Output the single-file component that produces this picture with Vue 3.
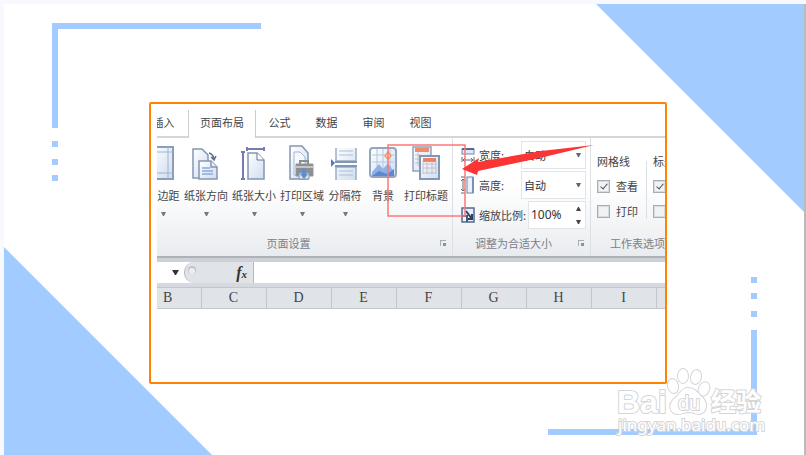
<template>
    <div class="page">
        <main class="slide">
            <div class="corner corner-top"></div>
            <div class="corner corner-bottom"></div>
            <svg class="bracket bracket-top" width="209" height="158" viewBox="0 0 209 158" fill="#a2cbff">
                <path d="M0 0H209V6H6V105H0zM0 118h6v6H0zM0 136h6v6H0zM0 152h6v6H0z" />
            </svg>
            <svg class="bracket bracket-bottom" width="209" height="158" viewBox="0 0 209 158" fill="#a2cbff">
                <path d="M209 158H0V152H203V53H209zM203 0h6v6h-6zM203 16h6v6h-6zM203 34h6v6h-6z" />
            </svg>

            <section class="card">
                <nav class="tabs">
                    <button class="tab tab-first">插入</button>
                    <button class="tab active">页面布局</button>
                    <button class="tab" v-for="name in tabs" :key="name">{{ name }}</button>
                    <span class="tab-rest"></span>
                </nav>

                <div class="ribbon">
                    <div class="group group-setup">
                        <div class="tools">
                            <button class="tool" v-for="tool in tools" :key="tool.icon" :class="tool.icon">
                                <svg class="tool-icon" width="30" height="36" viewBox="0 0 30 36" fill="none">
                                    <defs>
                                        <linearGradient :id="'g-' + tool.icon" x1="0" y1="0" x2="1" y2="1">
                                            <stop offset="0" stop-color="#ffffff" />
                                            <stop offset="1" stop-color="#cfdcf1" />
                                        </linearGradient>
                                    </defs>
                                    <g v-if="tool.icon === 'margins'" stroke="#8b9db8">
                                        <rect x="3" y="2" width="22" height="32" :fill="'url(#g-' + tool.icon + ')'" stroke-width="2" />
                                        <path d="M3 7H25M3 28H25M8 2V34M20 2V34" stroke="#9db3d2" />
                                    </g>
                                    <g v-else-if="tool.icon === 'direction'" :fill="'url(#g-' + tool.icon + ')'" stroke="#8296b3" stroke-width="1.5">
                                        <path d="M2 4H11L17 10V33H2z" />
                                        <path d="M8 16H20L26 22V34H8z" />
                                        <path d="M20 16V22H26" />
                                        <path d="M11 23H19M11 26H22M11 29H22" stroke="#8ba9db" />
                                        <path d="M18 8Q22 9 23 14M20 12L23 15L25 11" stroke="#5c708c" fill="none" />
                                    </g>
                                    <g v-else-if="tool.icon === 'size'">
                                        <path d="M4 7V35M2 7H6M2 34H6M8 4H25M8 2V6M25 2V6" stroke="#7a79b8" stroke-width="2" />
                                        <path d="M9 8H18L25 15V34H9z" :fill="'url(#g-' + tool.icon + ')'" stroke="#8296b3" stroke-width="1.5" />
                                        <path d="M18 8V15H25" fill="#fff" stroke="#62748d" />
                                    </g>
                                    <g v-else-if="tool.icon === 'area'">
                                        <path d="M3 1H15L21 8V34H3z" :fill="'url(#g-' + tool.icon + ')'" stroke="#8296b3" stroke-width="1.5" />
                                        <path d="M7 7H13L18 12V30H7z" fill="#f6f9ff" stroke="#a4b6d1" />
                                        <path d="M13 20V16H21V20" fill="none" stroke="#8c8c91" stroke-width="2" />
                                        <path d="M9 19H26V31H9z" fill="#8a8f96" stroke="#92979e" />
                                        <path d="M9 22H26" stroke="#c3c5c7" stroke-width="2" />
                                        <path d="M12 28H22V34H12z" fill="#dce2eb" stroke="#8894a5" />
                                        <path d="M15 24H19V29H21L17 34L13 29H15z" fill="#5990d1" />
                                    </g>
                                    <g v-else-if="tool.icon === 'breaks'">
                                        <path d="M6 3V16H26V3M6 35V22H26V35" :fill="'url(#g-' + tool.icon + ')'" stroke="#9badc5" stroke-width="1.5" />
                                        <path d="M9 6H23M9 10H23M9 26H23M9 30H23" stroke="#aebdd1" />
                                        <path d="M5 17H27M5 21H27" stroke="#8297b3" stroke-width="2" />
                                        <path d="M1 14L5 18L1 22z" fill="#4d7ad2" />
                                    </g>
                                    <g v-else-if="tool.icon === 'background'">
                                        <rect x="2" y="3" width="26" height="29" rx="3" :fill="'url(#g-' + tool.icon + ')'" stroke="#92a6c2" stroke-width="2" />
                                        <path d="M4 10H26M4 17H26M9 4V25M15 4V25M22 4V25" stroke="#b4c6df" />
                                        <path d="M4 27L11 19L15 24L20 18L26 27V31H4z" fill="#8fb2e6" />
                                        <path d="M4 31L11 26L19 29L26 24V31z" fill="#5b88d3" />
                                        <path d="M20 7L23 11L20 14L17 11z" fill="#fff2d7" stroke="#f29a67" stroke-width="1.5" />
                                    </g>
                                    <g v-else>
                                        <path d="M2 2H20V26H2z" :fill="'url(#g-' + tool.icon + ')'" stroke="#8ea3c0" stroke-width="1.5" />
                                        <path d="M4 5H18" stroke="#ef8c6c" stroke-width="4" />
                                        <path d="M4 10H10M4 14H10M4 18H10M7 7V21" stroke="#c3bfc9" />
                                        <rect x="9" y="11" width="19" height="23" :fill="'url(#g-' + tool.icon + ')'" stroke="#7f97b8" stroke-width="2" />
                                        <path d="M12 15H25" stroke="#ef805d" stroke-width="4" />
                                        <path d="M12 19H25M12 23H25M12 28H25M12 16V29M16 16V29M21 16V29M25 16V29" stroke="#c3bfc9" />
                                    </g>
                                </svg>
                                <span class="tool-name">{{ tool.name }}</span>
                                <svg v-if="tool.menu" class="caret" width="5" height="4" viewBox="0 0 5 4"><path d="M0 0H5L3 4H2z" fill="#777" /></svg>
                            </button>
                        </div>
                        <div class="group-title">页面设置</div>
                    </div>

                    <div class="group group-fit">
                        <div class="fit-rows">
                            <div class="fit-row">
                                <svg width="14" height="16" viewBox="0 0 14 16" fill="none"><rect x="1" y="2" width="12" height="5" fill="#dce8f9" stroke="#7287a5" /><path d="M1 2H13" stroke="#526b90" stroke-width="2" /><path d="M1 10V15M13 10V15M3 13H11M4 11L2 13L4 15M10 11L12 13L10 15" stroke="#5f697a" /></svg>
                                <label for="fit-width">宽度:</label>
                                <span class="field">
                                    <select id="fit-width" v-model="fitWidth"><option>自动</option></select>
                                    <svg class="field-mark" width="5" height="4" viewBox="0 0 5 4"><path d="M0 0H5L3 4H2z" fill="#666" /></svg>
                                </span>
                            </div>
                            <div class="fit-row">
                                <svg width="14" height="18" viewBox="0 0 14 18" fill="none"><rect x="6" y="1" width="6" height="16" fill="#eaf2ff" stroke="#6d84a5" /><path d="M12 1V17" stroke="#7992b4" stroke-width="2" /><path d="M0 1H4M0 17H4M2 3V15M0 5L2 3L4 5M0 13L2 15L4 13" stroke="#5f697a" /></svg>
                                <label for="fit-height">高度:</label>
                                <span class="field">
                                    <select id="fit-height" v-model="fitHeight"><option>自动</option></select>
                                    <svg class="field-mark" width="5" height="4" viewBox="0 0 5 4"><path d="M0 0H5L3 4H2z" fill="#666" /></svg>
                                </span>
                            </div>
                            <div class="fit-row">
                                <svg width="14" height="16" viewBox="0 0 14 16" fill="none"><rect x="1" y="1" width="12" height="14" fill="#e5efff" stroke="#576b89" stroke-width="1.5" /><path d="M1 9H6V15" fill="#fff" stroke="#445b7c" stroke-width="2" /><path d="M5 4L11 12M11 7V12H7" stroke="#2c405e" stroke-width="2" /></svg>
                                <label for="fit-scale">缩放比例:</label>
                                <span class="field field-scale">
                                    <input id="fit-scale" type="text" v-model="scale">
                                    <svg class="field-mark" width="5" height="17" viewBox="0 0 5 17"><path d="M2 0H3L5 4H0zM0 13H5L3 17H2z" fill="#444" /></svg>
                                </span>
                            </div>
                        </div>
                        <div class="group-title">调整为合适大小</div>
                    </div>

                    <div class="group group-sheet">
                        <div class="options">
                            <fieldset class="option">
                                <legend>网格线</legend>
                                <label><input type="checkbox" v-model="gridView">查看</label>
                                <label><input type="checkbox" v-model="gridPrint">打印</label>
                            </fieldset>
                            <fieldset class="option">
                                <legend>标题</legend>
                                <label><input type="checkbox" aria-label="查看标题" v-model="headView"></label>
                                <label><input type="checkbox" aria-label="打印标题" v-model="headPrint"></label>
                            </fieldset>
                        </div>
                        <div class="group-title">工作表选项</div>
                    </div>
                </div>

                <div class="formula">
                    <button class="name-menu" aria-label="名称框">
                        <svg width="7" height="5" viewBox="0 0 7 5"><path d="M0 0H7L4 5H3z" fill="#333" /></svg>
                    </button>
                    <div class="fx-box">
                        <span class="knob"></span>
                        <button class="fx">f<small>x</small></button>
                    </div>
                    <input class="formula-input" type="text" aria-label="编辑栏" v-model="formula">
                </div>

                <table class="sheet">
                    <thead>
                        <tr><th v-for="col in columns" :key="col">{{ col }}</th><th></th></tr>
                    </thead>
                </table>

                <svg class="note" width="210" height="78" viewBox="0 0 210 78">
                    <rect x="2" y="4" width="77" height="71" fill="none" stroke="#fb7777" stroke-width="1.5" />
                    <path d="M76 28L93 17L92 21L155 10L208 4L158 16L92 30L91 34z" fill="#fb3434" />
                </svg>
            </section>

            <svg class="watermark" width="152" height="70" viewBox="0 0 152 70" fill="#fff" stroke="#d5d5d8" stroke-width="2" paint-order="stroke">
                <text class="brand" x="5" y="47">Bai</text>
                <ellipse cx="61" cy="20" rx="5" ry="7" transform="rotate(-15 61 20)" />
                <ellipse cx="71" cy="10" rx="5" ry="7" />
                <ellipse cx="84" cy="11" rx="5" ry="7" transform="rotate(12 84 11)" />
                <ellipse cx="92" cy="23" rx="5" ry="7" transform="rotate(24 92 23)" />
                <path d="M76 22C70 22 68 28 63 32C55 39 58 48 66 48C71 48 73 46 77 46C81 46 84 48 87 48C95 47 96 38 91 32C86 27 83 22 76 22z" />
                <text class="du" x="66" y="44">du</text>
                <text class="brand-cn" x="99" y="45">经验</text>
                <text class="site" x="6" y="65">jingyan.baidu.com</text>
            </svg>
        </main>
    </div>
</template>

<script setup>
import { ref } from 'vue';

const tabs = ['公式', '数据', '审阅', '视图'];
const columns = ['B', 'C', 'D', 'E', 'F', 'G', 'H', 'I'];

const tools = [
    { icon: 'margins', name: '页边距', menu: true },
    { icon: 'direction', name: '纸张方向', menu: true },
    { icon: 'size', name: '纸张大小', menu: true },
    { icon: 'area', name: '打印区域', menu: true },
    { icon: 'breaks', name: '分隔符', menu: true },
    { icon: 'background', name: '背景', menu: false },
    { icon: 'titles', name: '打印标题', menu: false }
];

const fitWidth = ref('自动');
const fitHeight = ref('自动');
const scale = ref('100%');
const gridView = ref(true);
const gridPrint = ref(false);
const headView = ref(true);
const headPrint = ref(false);
const formula = ref('');
</script>

<style>
    body {
        background: #f7f9fe;
    }
</style>

<style scoped>
    .page {
        box-sizing: border-box;
        min-height: 100vh;
        padding: 4px 0 0 4px;
        display: flex;
        font-family: "Noto Sans CJK SC", sans-serif;
        font-size: 11px;
        line-height: 16px;
        color: #444;
    }

    .slide {
        position: relative;
        flex: 1;
        box-sizing: border-box;
        min-width: 0;
        padding: 98px 137px 70px 145px;
        border-right: 2px solid #b9bbbe;
        background: #fff;
        overflow: hidden;
    }

    /* slide decoration */
    .corner {
        position: absolute;
        width: 208px;
        height: 208px;
        background: #a2cbff;
    }
    .corner-top {
        top: 0;
        right: 0;
        clip-path: polygon(0 0, 100% 0, 100% 100%);
    }
    .corner-bottom {
        bottom: 0;
        left: 0;
        clip-path: polygon(0 0, 100% 100%, 0 100%);
    }
    .bracket {
        position: absolute;
    }
    .bracket-top {
        top: 19px;
        left: 48px;
    }
    .bracket-bottom {
        right: 47px;
        bottom: 20px;
    }

    .card {
        position: relative;
        padding: 6px 0 73px 6px;
        border: 2px solid #ff8205;
        border-radius: 2px;
        background: #fff;
        overflow: hidden;
    }

    button {
        padding: 0;
        border: none;
        background: none;
        font: inherit;
        color: inherit;
        white-space: nowrap;
    }

    .tabs {
        display: flex;
        height: 28px;
        overflow: hidden;
    }
    .tab {
        flex: none;
        width: 47px;
        padding-bottom: 2px;
        border-bottom: 2px solid #d3d6da;
    }
    .tab-first {
        width: 37px;
        margin-left: -6px;
        padding-right: 12px;
    }
    .tab.active {
        width: 68px;
        padding-bottom: 4px;
        border: solid #c9cdd1;
        border-width: 0 1px;
    }
    .tab-rest {
        flex: 1;
        border-bottom: 2px solid #d3d6da;
    }

    .ribbon {
        display: flex;
        height: 118px;
        background: linear-gradient(#fff 40%, #e9ecef);
        border-bottom: 2px solid #aeb2b9;
        overflow: hidden;
    }
    .group {
        flex: none;
        display: flex;
        flex-direction: column;
        box-sizing: border-box;
        border-right: 1px solid #dcdfe3;
    }
    .group-title {
        position: relative;
        margin-top: auto;
        padding: 0 16px 5px 0;
        height: 16px;
        line-height: 16px;
        text-align: center;
        color: #7b8088;
        white-space: nowrap;
    }
    /* dialog launcher in the corner of a group */
    .group-title::after {
        content: "";
        position: absolute;
        right: 6px;
        top: 5px;
        width: 5px;
        height: 5px;
        border: solid #a9adb3;
        border-width: 1px 0 0 1px;
        background: linear-gradient(#8d9299, #8d9299) right bottom / 3px 3px no-repeat;
    }

    .group-setup {
        width: 296px;
        overflow: hidden;
    }
    .group-setup .group-title {
        padding-right: 32px;
    }
    .tools {
        display: flex;
        margin-left: -13px;
        padding-top: 7px;
    }
    .tool {
        flex: none;
        display: flex;
        flex-direction: column;
        align-items: center;
        width: 48px;
    }
    .tool.margins, .tool.breaks, .tool.background {
        width: 38px;
    }
    .tool-name {
        margin-top: 6px;
    }
    .caret {
        margin-top: 9px;
    }

    .group-fit {
        width: 138px;
    }
    .fit-rows {
        display: flex;
        flex-direction: column;
        gap: 2px;
        padding: 3px 4px 0 8px;
    }
    .fit-row {
        display: flex;
        align-items: center;
        height: 28px;
    }
    .fit-row label {
        margin-left: 4px;
        white-space: nowrap;
    }
    .field {
        display: flex;
        align-items: center;
        box-sizing: border-box;
        width: 65px;
        height: 28px;
        margin-left: auto;
        padding-right: 4px;
        border: 1px solid #e1e4e8;
        background: #fff;
    }
    .field-scale {
        width: 58px;
    }
    .field select, .field input {
        appearance: none;
        flex: 1;
        min-width: 0;
        padding: 0 0 0 2px;
        border: none;
        background: none;
        font: inherit;
        color: #333;
        outline: none;
    }
    .field input {
        font-family: "Noto Sans", sans-serif;
        font-size: 12px;
    }

    .group-sheet {
        flex: 1;
        min-width: 0;
        border-right: none;
        overflow: hidden;
    }
    .group-sheet .group-title {
        padding: 0 0 5px 19px;
        text-align: left;
    }
    .group-sheet .group-title::after {
        display: none;
    }
    .options {
        display: flex;
        padding-top: 15px;
    }
    .option {
        flex: none;
        box-sizing: border-box;
        width: 56px;
        min-width: 0;
        margin: 0;
        padding: 0 0 0 6px;
        border: none;
        border-right: 1px solid #dcdfe3;
    }
    .option legend {
        padding: 0;
    }
    .option label {
        display: flex;
        align-items: center;
        gap: 6px;
        height: 16px;
        margin-top: 9px;
        white-space: nowrap;
    }
    .option input {
        appearance: none;
        box-sizing: border-box;
        width: 13px;
        height: 13px;
        margin: 0;
        border: 1px solid #a9adb2;
        background: #f1f2f4;
        box-shadow: inset 0 0 0 1px #d9dcdf;
    }
    .option input:checked::before {
        content: "";
        display: block;
        width: 3px;
        height: 6px;
        margin: 1px 0 0 4px;
        border: solid #4b5362;
        border-width: 0 1px 1px 0;
        transform: rotate(40deg);
    }

    .formula {
        display: flex;
        height: 21px;
        border-top: 4px solid #cdd1d7;
        border-bottom: 4px solid #d6d9e0;
    }
    .name-menu {
        display: flex;
        align-items: center;
        width: 27px;
        padding-left: 15px;
    }
    .fx-box {
        display: flex;
        align-items: center;
        justify-content: space-between;
        box-sizing: border-box;
        width: 70px;
        padding: 0 6px 0 4px;
        border: solid #b4b9c0;
        border-width: 0 1px;
        border-radius: 10px 0 0 10px;
        background: #e0e4e9;
    }
    .knob {
        width: 6px;
        height: 6px;
        margin-bottom: 4px;
        border-radius: 3px;
        background: #eceef1;
        box-shadow: 0 -1px 0 1px #c0c4ca;
    }
    .fx {
        font: italic bold 16px "Liberation Serif", serif;
        color: #333;
    }
    .fx small {
        font-size: 11px;
    }
    .formula-input {
        flex: 1;
        min-width: 0;
        border: none;
        outline: none;
    }

    .sheet {
        width: 100%;
        table-layout: fixed;
        border-collapse: collapse;
    }
    .sheet th {
        box-sizing: border-box;
        width: 65px;
        height: 21px;
        padding: 0;
        border: solid #c3c7cd;
        border-width: 1px 1px 1px 0;
        background: #e0e4e9;
        font: 14px "Liberation Serif", serif;
        color: #444;
    }
    .sheet th:first-child {
        width: 44px;
        padding-right: 22px;
    }
    .sheet th:last-child {
        width: auto;
        border-right: none;
    }

    .note {
        position: absolute;
        left: 235px;
        top: 37px;
        pointer-events: none;
    }

    .watermark {
        position: absolute;
        right: 40px;
        bottom: 19px;
        overflow: visible;
        font-family: "Liberation Sans", sans-serif;
    }
    .brand {
        font-size: 32px;
        font-weight: bold;
    }
    .du {
        font-size: 20px;
    }
    .brand-cn {
        font-family: "Noto Sans CJK SC", sans-serif;
        font-size: 25px;
        font-weight: bold;
    }
    .site {
        font-family: "Noto Sans", sans-serif;
        font-size: 17px;
    }
</style>
